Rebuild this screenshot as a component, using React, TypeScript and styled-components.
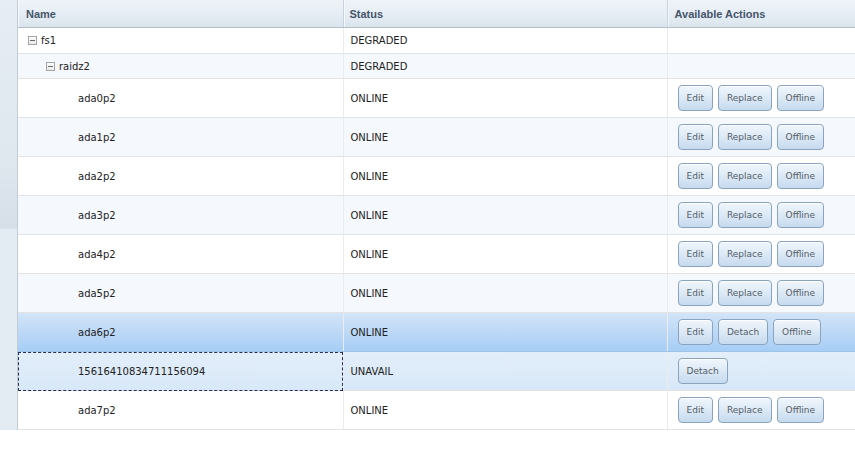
import React from "react";
import styled, { createGlobalStyle } from "styled-components";

const Global = createGlobalStyle`
  html, body {
    margin: 0;
    padding: 0;
    background: #ffffff;
  }
  body {
    font-family: "DejaVu Sans", Verdana, sans-serif;
    font-size: 10px;
    color: #222;
  }
`;

type Row = {
  name: string;
  status: string;
  level: number;
  tree?: boolean;
  actions: string[];
  alt?: boolean;
  selected?: boolean;
  focused?: boolean;
};

const rows: Row[] = [
  { name: "fs1", status: "DEGRADED", level: 0, tree: true, actions: [] },
  { name: "raidz2", status: "DEGRADED", level: 1, tree: true, actions: [], alt: true },
  { name: "ada0p2", status: "ONLINE", level: 2, actions: ["Edit", "Replace", "Offline"] },
  { name: "ada1p2", status: "ONLINE", level: 2, actions: ["Edit", "Replace", "Offline"], alt: true },
  { name: "ada2p2", status: "ONLINE", level: 2, actions: ["Edit", "Replace", "Offline"] },
  { name: "ada3p2", status: "ONLINE", level: 2, actions: ["Edit", "Replace", "Offline"], alt: true },
  { name: "ada4p2", status: "ONLINE", level: 2, actions: ["Edit", "Replace", "Offline"] },
  { name: "ada5p2", status: "ONLINE", level: 2, actions: ["Edit", "Replace", "Offline"], alt: true },
  { name: "ada6p2", status: "ONLINE", level: 2, actions: ["Edit", "Detach", "Offline"], selected: true },
  { name: "15616410834711156094", status: "UNAVAIL", level: 2, actions: ["Detach"], focused: true },
  { name: "ada7p2", status: "ONLINE", level: 2, actions: ["Edit", "Replace", "Offline"] },
];

const Page = styled.div`
  display: flex;
  align-items: flex-start;
  width: 855px;
`;

const Gutter = styled.div`
  width: 17px;
  height: 430px;
  flex-shrink: 0;
  display: flex;
  flex-direction: column;
  border-right: 1px solid #c3ccd5;
  background: #e3ebf3;
`;

const GutterTop = styled.div`
  height: 229px;
  background: linear-gradient(180deg, #e6edf4 0%, #dfe7ef 70%, #d6dfe8 100%);
`;

const Grid = styled.table`
  border-collapse: collapse;
  table-layout: fixed;
  width: 837px;
  flex-shrink: 0;
`;

const Col = styled.col<{ $w: number }>`
  width: ${(p) => p.$w}px;
`;

const HeadCell = styled.th<{ $pad: number }>`
  height: 27px;
  padding: 0 0 0 ${(p) => p.$pad}px;
  text-align: left;
  font-family: "Liberation Sans", Arial, sans-serif;
  font-weight: bold;
  font-size: 11px;
  color: #46566a;
  background: linear-gradient(180deg, #eef3f8 0%, #e6edf4 50%, #dbe4ed 100%);
  border-bottom: 1px solid #b3bfcb;
  border-right: 1px solid #c8d2dc;
  box-shadow: inset 1px 0 0 #f6f9fc;
  &:last-child {
    border-right: none;
  }
`;

const BodyRow = styled.tr<{ $alt?: boolean; $selected?: boolean; $focused?: boolean; $h: number }>`
  height: ${(p) => p.$h}px;
  background: ${(p) =>
    p.$selected
      ? "linear-gradient(180deg, #d3e5f8 0%, #bcd8f6 50%, #a5cdf6 100%)"
      : p.$focused
      ? "linear-gradient(180deg, #e3eefa 0%, #d8e8f8 100%)"
      : p.$alt
      ? "#f5f8fc"
      : "#ffffff"};
  & > td {
    border-bottom: 1px solid ${(p) => (p.$selected ? "#9fc3e6" : "#e3e3e3")};
    border-top: ${(p) => (p.$selected ? "1px solid #a9b4be" : "none")};
  }
`;

const Cell = styled.td<{ $focus?: boolean }>`
  padding: 0 0 0 7px;
  vertical-align: middle;
  border-right: 1px solid #ececec;
  color: #222;
  white-space: nowrap;
  overflow: hidden;
  outline: ${(p) => (p.$focus ? "1px dashed #1f2f57" : "none")};
  outline-offset: -1px;
  &:last-child {
    border-right: none;
  }
`;

const NameBox = styled.div<{ $level: number }>`
  display: flex;
  align-items: center;
  gap: 4px;
  padding-left: ${(p) => (p.$level === 2 ? 53 : 3 + p.$level * 18)}px;
`;

const Expander = styled.span`
  width: 7px;
  height: 7px;
  border: 1px solid #a5a5a5;
  background: linear-gradient(180deg, #fdfdfd, #e9e9e9);
  display: inline-flex;
  align-items: center;
  justify-content: center;
  &::after {
    content: "";
    width: 5px;
    height: 1px;
    background: #6a6a6a;
  }
`;

const Actions = styled.div`
  display: flex;
  gap: 5px;
  padding-left: 3px;
`;

const Button = styled.button`
  height: 26px;
  padding: 0 8px;
  border: 1px solid #8aa4bf;
  border-radius: 4px;
  background: linear-gradient(180deg, #f0f6fc 0%, #dce9f6 50%, #c6daee 100%);
  box-shadow: inset 0 1px 0 #ffffff;
  font-family: "DejaVu Sans", Verdana, sans-serif;
  font-size: 9px;
  color: #555d66;
  cursor: pointer;
`;

export default function App() {
  return (
    <Page>
      <Global />
      <Gutter>
        <GutterTop />
      </Gutter>
      <Grid>
        <colgroup>
          <Col $w={325} />
          <Col $w={324} />
          <Col $w={188} />
        </colgroup>
        <thead>
          <tr>
            <HeadCell $pad={8}>Name</HeadCell>
            <HeadCell $pad={6}>Status</HeadCell>
            <HeadCell $pad={7}>Available Actions</HeadCell>
          </tr>
        </thead>
        <tbody>
          {rows.map((r) => (
            <BodyRow
              key={r.name}
              $alt={r.alt}
              $selected={r.selected}
              $focused={r.focused}
              $h={r.tree ? (r.level === 0 ? 26 : 25) : 39}
            >
              <Cell $focus={r.focused}>
                <NameBox $level={r.level}>
                  {r.tree && <Expander />}
                  <span>{r.name}</span>
                </NameBox>
              </Cell>
              <Cell>{r.status}</Cell>
              <Cell>
                <Actions>
                  {r.actions.map((a) => (
                    <Button key={a}>{a}</Button>
                  ))}
                </Actions>
              </Cell>
            </BodyRow>
          ))}
        </tbody>
      </Grid>
    </Page>
  );
}
